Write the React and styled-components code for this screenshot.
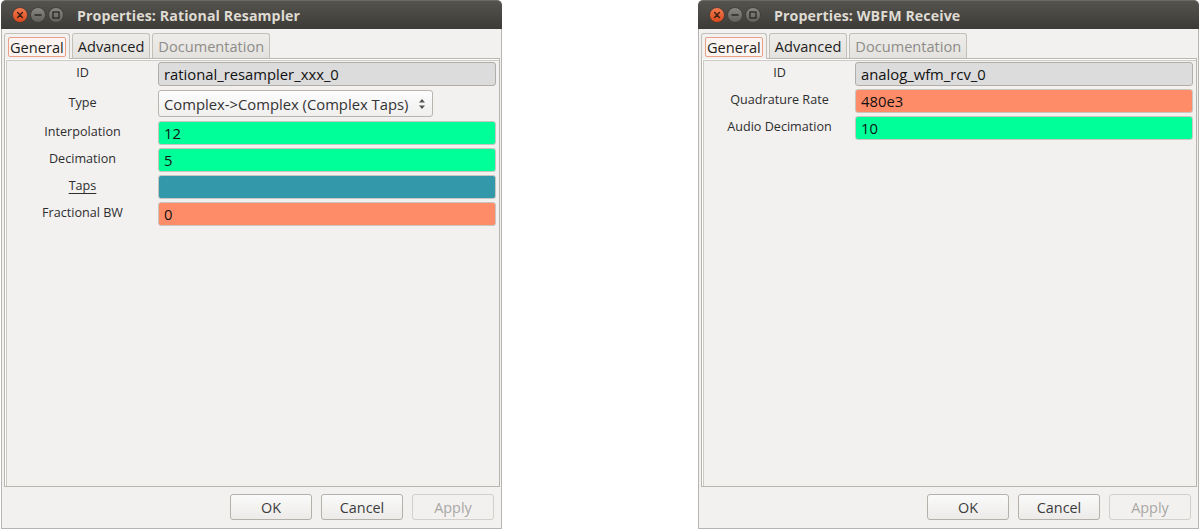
import React from "react";
import styled, { createGlobalStyle } from "styled-components";

const Global = createGlobalStyle`
  html, body { margin: 0; padding: 0; background: #ffffff; }
  body { font-family: "Open Sans", "DejaVu Sans", sans-serif; }
  * { box-sizing: border-box; }
`;

const Page = styled.div`
  display: flex;
  gap: 196px;
  padding-left: 1px;
  width: 1200px;
  height: 530px;
  overflow: hidden;
`;

const Win = styled.div`
  width: 501px;
  height: 529px;
  display: flex;
  flex-direction: column;
  flex-shrink: 0;
`;

const TitleBar = styled.div`
  height: 29px;
  flex-shrink: 0;
  display: flex;
  align-items: center;
  padding-left: 10px;
  border-radius: 5px 5px 0 0;
  background: linear-gradient(#55534e, #3c3b37);
  border-top: 1px solid #6a6863;
`;

const Controls = styled.svg`
  width: 58px;
  height: 20px;
  flex-shrink: 0;
`;

const Title = styled.div`
  margin-left: 8px;
  font-family: "Open Sans", sans-serif;
  font-weight: 700;
  font-size: 14.2px;
  color: #dfdbd2;
  letter-spacing: 0.1px;
`;

const Body = styled.div`
  flex: 1;
  display: flex;
  flex-direction: column;
  background: #f2f1f0;
  border: 1px solid #b7b5b1;
  border-top: none;
  padding: 3px 1px 8px 2px;
`;

const TabRow = styled.div`
  display: flex;
  align-items: flex-end;
  gap: 2px;
  height: 26px;
`;

const Tab = styled.div`
  height: ${p => (p.$active ? "26px" : "25px")};
  padding: ${p => (p.$active ? "3px 3px 2px" : "0 5px")};
  display: flex;
  align-items: center;
  border: 1px solid #c3c0ba;
  border-bottom: none;
  border-radius: 3px 3px 0 0;
  background: ${p => (p.$active ? "#f2f1f0" : "linear-gradient(#eeedeb, #e4e2df)")};
  font-size: 14.6px;
  color: ${p => (p.$disabled ? "#8e8c88" : "#1e1e1e")};
  margin-bottom: ${p => (p.$active ? "-1px" : "0")};
  position: relative;
  z-index: ${p => (p.$active ? 2 : 1)};
`;

const TabFocus = styled.span`
  display: flex;
  align-items: center;
  height: 100%;
  padding: 0 1px;
  border: 1px solid #eaa088;
  border-radius: 2px;
  background: #fbf4f1;
`;

const Panel = styled.div`
  height: 429px;
  border: 1px solid #b9b6b0;
  box-shadow: inset 1px 1px 0 #ffffff, inset 2px 2px 0 #cdcac4;
  padding: 3px 3px 0 2px;
  display: flex;
  flex-direction: column;
  gap: 3px;
`;

const Row = styled.div`
  display: grid;
  grid-template-columns: 151px 1fr;
  align-items: center;
  height: ${p => (p.$tall ? "29px" : "24px")};
`;

const Label = styled.div`
  text-align: center;
  font-size: 12.6px;
  color: #2e2e2e;
  padding-bottom: 3px;
  text-decoration: ${p => (p.$underline ? "underline" : "none")};
  text-underline-offset: 3px;
`;

const Field = styled.div`
  height: 24px;
  border: 1px solid ${p => (p.$bg === "#DCDCDC" ? "#b1aeaa" : "#c9c6c0")};
  border-radius: 3px;
  background: ${p => p.$bg};
  font-size: 14.8px;
  color: #111;
  display: flex;
  align-items: center;
  padding-left: 5px;
`;

const Select = styled.div`
  height: 27px;
  width: 275px;
  border: 1px solid #b8b5af;
  border-radius: 3px;
  background: linear-gradient(#fdfdfd, #f0efee);
  font-size: 14.8px;
  color: #333;
  display: flex;
  align-items: center;
  justify-content: space-between;
  padding: 0 6px 0 5px;
  white-space: nowrap;
`;

const Arrows = styled.svg`
  width: 8px;
  height: 12px;
  flex-shrink: 0;
`;

const ButtonRow = styled.div`
  display: flex;
  justify-content: flex-end;
  gap: 9px;
  margin-top: 7px;
  padding-right: 6px;
`;

const Button = styled.div`
  width: 82px;
  height: 26px;
  border: 1px solid ${p => (p.$disabled ? "#d3d0cb" : "#b4b0aa")};
  border-radius: 3px;
  background: ${p => (p.$disabled ? "#f2f1f0" : "linear-gradient(#fafafa, #ecebe9)")};
  display: flex;
  align-items: center;
  justify-content: center;
  font-size: 14.4px;
  color: ${p => (p.$disabled ? "#a9a7a3" : "#3c3c3c")};
`;

const WindowButtons = () => (
  <Controls viewBox="0 0 58 20">
    <defs>
      <linearGradient id="cl" x1="0" y1="0" x2="0" y2="1">
        <stop offset="0" stopColor="#f37b4f" />
        <stop offset="1" stopColor="#d8491d" />
      </linearGradient>
      <linearGradient id="gr" x1="0" y1="0" x2="0" y2="1">
        <stop offset="0" stopColor="#8a8984" />
        <stop offset="1" stopColor="#5f5e5a" />
      </linearGradient>
    </defs>
    <circle cx="9" cy="10" r="7.5" fill="url(#cl)" stroke="#3a3935" strokeWidth="0.8" />
    <path d="M6.6 7.6 L11.4 12.4 M11.4 7.6 L6.6 12.4" stroke="#3b2016" strokeWidth="1.4" strokeLinecap="round" />
    <circle cx="27" cy="10" r="7.5" fill="url(#gr)" stroke="#3a3935" strokeWidth="0.8" />
    <path d="M23.5 10 H30.5" stroke="#2e2d2a" strokeWidth="1.6" />
    <circle cx="45" cy="10" r="7.5" fill="url(#gr)" stroke="#3a3935" strokeWidth="0.8" />
    <rect x="42" y="7" width="6" height="6" fill="none" stroke="#2e2d2a" strokeWidth="1.4" />
  </Controls>
);

const Dialog = ({ title, rows }) => (
  <Win>
    <TitleBar>
      <WindowButtons />
      <Title>{title}</Title>
    </TitleBar>
    <Body>
      <TabRow>
        <Tab $active><TabFocus>General</TabFocus></Tab>
        <Tab>Advanced</Tab>
        <Tab $disabled>Documentation</Tab>
      </TabRow>
      <Panel>
        {rows.map(r => (
          <Row key={r.label} $tall={r.select}>
            <Label $underline={r.underline}>{r.label}</Label>
            {r.select ? (
              <Select>
                <span>{r.value}</span>
                <Arrows viewBox="0 0 8 12">
                  <path d="M4 1 L7 4.5 H1 Z" fill="#55544f" />
                  <path d="M4 11 L7 7.5 H1 Z" fill="#55544f" />
                </Arrows>
              </Select>
            ) : (
              <Field $bg={r.bg}>{r.value}</Field>
            )}
          </Row>
        ))}
      </Panel>
      <ButtonRow>
        <Button>OK</Button>
        <Button>Cancel</Button>
        <Button $disabled>Apply</Button>
      </ButtonRow>
    </Body>
  </Win>
);

const left = [
  { label: "ID", value: "rational_resampler_xxx_0", bg: "#DCDCDC" },
  { label: "Type", value: "Complex->Complex (Complex Taps)", select: true },
  { label: "Interpolation", value: "12", bg: "#00FF99" },
  { label: "Decimation", value: "5", bg: "#00FF99" },
  { label: "Taps", value: "", bg: "#3399AA", underline: true },
  { label: "Fractional BW", value: "0", bg: "#FF8C69" },
];

const right = [
  { label: "ID", value: "analog_wfm_rcv_0", bg: "#DCDCDC" },
  { label: "Quadrature Rate", value: "480e3", bg: "#FF8C69" },
  { label: "Audio Decimation", value: "10", bg: "#00FF99" },
];

export default function App() {
  return (
    <>
      <Global />
      <Page>
        <Dialog title="Properties: Rational Resampler" rows={left} />
        <Dialog title="Properties: WBFM Receive" rows={right} />
      </Page>
    </>
  );
}
